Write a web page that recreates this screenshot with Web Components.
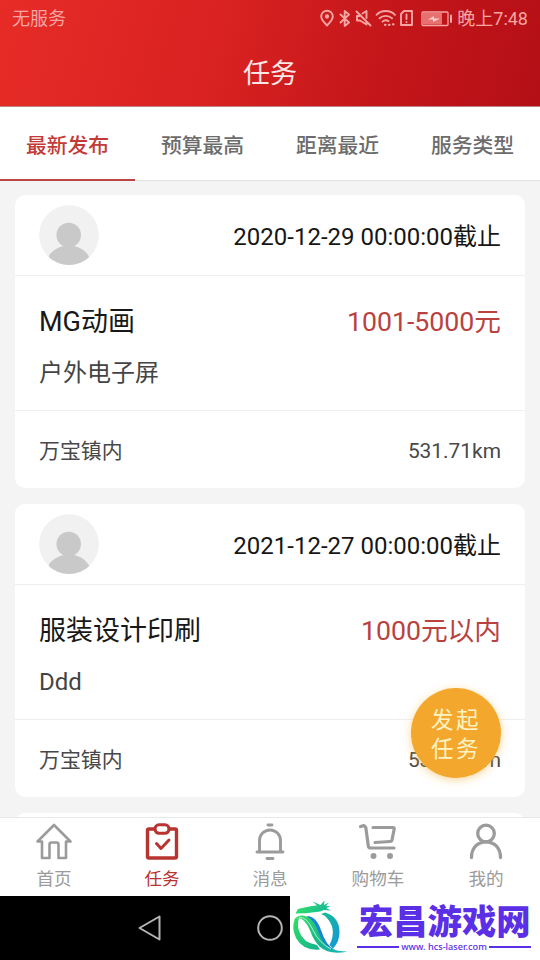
<!DOCTYPE html>
<html lang="zh-CN">
<head>
<meta charset="utf-8">
<title>任务</title>
<style>
html,body{margin:0;padding:0;width:540px;height:960px;overflow:hidden}
body{font-family:Roboto,"Noto Sans CJK SC",sans-serif;background:#f4f4f4}
</style>
</head>
<body>
<task-app></task-app>
<script>
const define=(name,html,setup)=>customElements.define(name,class extends HTMLElement{
  constructor(){
    super();
    const t=document.createElement('template');
    t.innerHTML=html;
    this.attachShadow({mode:'open'}).append(t.content.cloneNode(true));
  }
  connectedCallback(){ if(setup) setup(this,this.shadowRoot); }
});

define('status-bar',`<style>
:host{display:flex;align-items:center;justify-content:space-between;height:38px;padding:0 12px;box-sizing:border-box;color:#f5a5a2;font-size:18px;line-height:38px}
.r{display:flex;align-items:center}
svg{display:block;margin-right:4px}
</style>
<span>无服务</span>
<span class="r">
<svg width="134" height="20" viewBox="0 0 134 20" fill="none" stroke="#f5a5a2" stroke-width="1.9" stroke-linecap="round" stroke-linejoin="round">
<path d="M8 16.500C4.500 13 2.200 10.500 2.200 7.500a5.800 5.800 0 0 1 11.600 0c0 3-2.300 5.500-5.800 9z"/><circle cx="8" cy="7.500" r="1.200" fill="#f5a5a2"/>
<path d="M21.500 5.500l8.500 8-4.300 3.500V2l4.300 3.500-8.500 8"/>
<path d="M37.500 2.500l14 14M40.500 7h-2.500v4.500h3l6.500 4v-3M43.500 4.500l4-2.500v7"/>
<path d="M57.500 5.800c5-5 13.500-5 18.500 0M60.500 9.300c3.500-3.300 9-3.300 12.500 0M63.500 12.700c1.500-1.500 4-1.700 6-.6"/><path d="M66 15.800h.5M70 15.800h.5M74 15.300h.5" stroke-width="2.300"/>
<path d="M82 5l3-3h8v14H82z"/><path d="M87.500 5.500v4.500M87.500 13v.3"/>
<rect x="103" y="3" width="26" height="13.500" rx="1" stroke-width="1.300"/><rect x="104" y="4" width="19" height="11.500" fill="#e8706e" stroke="none"/><path d="M109 10.500l6-3.500v2.500h6l-7 3.500v-2.500z" fill="#ffd0cc" stroke="none"/><path d="M132 6.500v6.500" stroke-width="2"/>
</svg><span>晚上7:48</span></span>`);

define('app-header',`<style>
:host{display:block;height:107px;background:linear-gradient(105deg,#e72c27 0%,#d82121 42%,#c4161a 70%,#b40f16 100%);border-bottom:1px solid #b98585;box-sizing:border-box}
h1{margin:0;font-weight:400;font-size:27px;line-height:72px;text-align:center;color:#fbe7e5}
</style><status-bar></status-bar><h1><slot></slot></h1>`);

define('filter-tab',`<style>
:host{display:block;flex:1;text-align:center;font-size:20.8px;font-weight:500;line-height:76px;height:72px;color:#6c6c6c;border-bottom:1px solid #e3e3e3;position:relative}
:host([active]){color:#c23b38}
:host([active])::after{content:"";position:absolute;left:0;right:0;bottom:-1px;height:2px;background:#b94642}
</style><slot></slot>`);

define('filter-tabs',`<style>:host{display:flex;height:74px;background:#fff;box-sizing:border-box;padding-top:1px}</style><slot></slot>`);

define('user-avatar',`<style>:host{display:block;width:60px;height:60px}svg{display:block;border-radius:50%}</style>
<svg width="60" height="60" viewBox="0 0 60 60"><circle cx="30" cy="30" r="30" fill="#f1f1f1"/><g fill="#c9c9c9"><circle cx="29.700" cy="30" r="12.300"/><path d="M25 38v3c-6 1-12 5-15 9.500V60h40v-8.500C47 46 41 42 34.500 41v-3z"/></g></svg>`);

define('task-card',`<style>
:host{display:block;height:293px;background:#fff;border-radius:10px;overflow:hidden;flex:none}
.top,.foot,.row{display:flex;justify-content:space-between;align-items:center;padding:0 24px}
.top{height:81px;border-bottom:1px solid #eee;box-sizing:border-box}
.date{font-size:24px;line-height:36px;color:#161616;padding-top:4px}
.body{height:135px;border-bottom:1px solid #eee;box-sizing:border-box;padding-top:24px}
.row{height:44px;line-height:44px;font-size:27px;color:#181818}
.price{color:#b9423f;font-size:26.7px}
.desc{padding:5px 24px 0;font-size:24px;line-height:48px;color:#444}
.foot{height:77px;font-size:20.9px;color:#484848;line-height:77px;padding-top:2px}
</style>
<div class="top"><user-avatar></user-avatar><span class="date"><slot name="date"></slot></span></div>
<div class="body"><div class="row"><slot name="title"></slot><span class="price"><slot name="price"></slot></span></div><div class="desc"><slot name="desc"></slot></div></div>
<div class="foot"><slot name="place"></slot><slot name="dist"></slot></div>`);

define('fab-button',`<style>
:host{position:absolute;left:411px;top:688px;width:90px;height:90px;box-sizing:border-box;padding-top:18px;border-radius:50%;background:#f3a82d;box-shadow:0 2px 9px rgba(248,180,70,.55);color:#fff3c4;font-size:22.5px;line-height:29px;letter-spacing:2.500px;text-align:center}
</style><slot></slot>`);

const icons={
home:'<path d="M7 18.500H2.500L19 2l16.500 16.500H31V35h-7.500V21.500q0-2-2-2h-5q-2 0-2 2V35H7z" stroke-width="2.600"/>',
task:'<rect x="4.500" y="6" width="29" height="29" rx="1.500" stroke-width="3.400"/><rect x="12" y="1.800" width="14" height="8.500" rx="4" fill="#fff" stroke-width="3.100"/><path d="M13.500 20.500l4.500 5 8-8.500" stroke-width="3"/>',
bell:'<path d="M17 2h4M6 29h26M8.500 28.500V17.500a10.500 10.500 0 0 1 21 0v11M16 35.500h6" stroke-width="2.900"/>',
cart:'<path d="M1.500 3.500l3.500-1 1.800 2 2.500 18.500q.3 2 2.500 2H35M14 4.500h20q1.500 0 1.200 1.500L33 17q-.3 1.500-1.800 1.500L16 19.500" stroke-width="3.200"/><path d="M14.500 33v.1M31 33v.1" stroke-width="6"/>',
user:'<circle cx="19" cy="10.500" r="8.300" stroke-width="3.300"/><path d="M4.500 34.500C4.500 24.500 11 18.800 19 18.800S33.500 24.500 33.500 34.500" stroke-width="3.300"/>'};
define('nav-item',`<style>
:host{flex:1;display:flex;flex-direction:column;align-items:center;color:#9b9b9b;font-size:17.6px;line-height:26px;padding-top:5px}
:host([active]){color:#b83431}
svg{display:block;margin-bottom:5px;overflow:visible}
</style><svg width="38" height="38" viewBox="0 0 38 38" fill="none" stroke="currentColor" stroke-linecap="round" stroke-linejoin="round"></svg><slot></slot>`,(el,r)=>{r.querySelector('svg').innerHTML=icons[el.getAttribute('icon')];});

define('site-mark',`<style>
:host{position:absolute;left:290px;top:0;width:250px;height:64px;background:#fff;color:#5a2fe6;display:flex;align-items:flex-start}
.logo{display:block;flex:none}
.t{display:flex;flex-direction:column;width:176px}
.name{font:900 34.3px/40px "Noto Sans CJK SC",sans-serif;white-space:nowrap;margin:3px 0 0 1px}
.url{display:flex;align-items:center;gap:2px;font:500 9.200px/12px "Noto Sans",sans-serif;margin-top:2px;white-space:nowrap;width:174px;margin-left:-1px}
.url i{flex:1;height:2px;background:#5a2fe6}
</style>
<svg class="logo" width="68" height="64" viewBox="0 0 68 64"><defs>
<linearGradient id="a" gradientUnits="userSpaceOnUse" x1="4" y1="14" x2="54" y2="44"><stop offset="0" stop-color="#31e066"/><stop offset=".5" stop-color="#15b999"/><stop offset="1" stop-color="#1595dc"/></linearGradient>
<linearGradient id="b" gradientUnits="userSpaceOnUse" x1="5" y1="22" x2="50" y2="58"><stop offset="0" stop-color="#2fdd65"/><stop offset=".65" stop-color="#15b48f"/><stop offset="1" stop-color="#18b8c0"/></linearGradient></defs>
<path fill="url(#a)" d="M5.500 17.500L8 13q8-2 14-3l5-.5-4.500-4 8 3.500 4-4.500-.5 4.500 5-2.500-3 3.500 5 .5-5 1.500 5 2.500-7-.5q-4 2-8 2-10 1.500-20.500 1.500z"/>
<path fill="url(#a)" d="M35 16.500q14 4 14.500 19 .3 10-6.500 17l-3.500-3.500Q48 32 35 20l-4-2z"/>
<path fill="url(#b)" d="M5 23Q1 31 6 42q7 13 24 11.500L27 49Q13 47 9 35 7 29 9 22z"/>
<path fill="#1785d2" d="M17 20q9 0 14 14 5 16 14 20-13-1-19-14-4-12-9-20z"/>
<path fill="url(#b)" d="M4 24q3-5 9-4.500 9 1 14 13 6 17 14 20 6 3 16.500 3-18 4-28-5-6-6-9-15Q15 22 8 22z"/>
<path fill="none" stroke="#bdf5df" stroke-width=".9" d="M9 21q8 0 14 13t18 19"/>
</svg><div class="t"><div class="name">宏昌游戏网</div><div class="url"><i></i><span>www. hcs-laser.com</span><i></i></div></div>`);

define('system-bar',`<style>
:host{display:block;height:64px;background:#000;position:relative}
svg{display:block}
</style><svg width="290" height="64" viewBox="0 0 290 64" fill="none" stroke="#b5b5b5" stroke-width="2" stroke-linejoin="round"><path d="M139.500 32l20-11.500v23z"/><circle cx="270" cy="32" r="11.800"/></svg><site-mark></site-mark>`);

define('task-app',`<style>
:host{display:flex;flex-direction:column;width:540px;height:960px;position:relative;overflow:hidden;background:#f4f4f4}
main{flex:1;min-height:0;overflow:hidden;padding:14px 15px 0;display:flex;flex-direction:column;gap:16px}
nav{display:flex;height:79px;box-sizing:border-box;background:#fff;border-top:1px solid #e8e8e8;flex:none}
</style>
<app-header>任务</app-header>
<filter-tabs><filter-tab active>最新发布</filter-tab><filter-tab>预算最高</filter-tab><filter-tab>距离最近</filter-tab><filter-tab>服务类型</filter-tab></filter-tabs>
<main>
<task-card><span slot="date">2020-12-29 00:00:00截止</span><span slot="title">MG动画</span><span slot="price">1001-5000元</span><span slot="desc">户外电子屏</span><span slot="place">万宝镇内</span><span slot="dist">531.71km</span></task-card>
<task-card><span slot="date">2021-12-27 00:00:00截止</span><span slot="title">服装设计印刷</span><span slot="price">1000元以内</span><span slot="desc">Ddd</span><span slot="place">万宝镇内</span><span slot="dist">531.71km</span></task-card>
<task-card></task-card>
</main>
<nav><nav-item icon="home">首页</nav-item><nav-item icon="task" active>任务</nav-item><nav-item icon="bell">消息</nav-item><nav-item icon="cart">购物车</nav-item><nav-item icon="user">我的</nav-item></nav>
<system-bar></system-bar>
<fab-button>发起<br>任务</fab-button>`);
</script>
</body>
</html>
